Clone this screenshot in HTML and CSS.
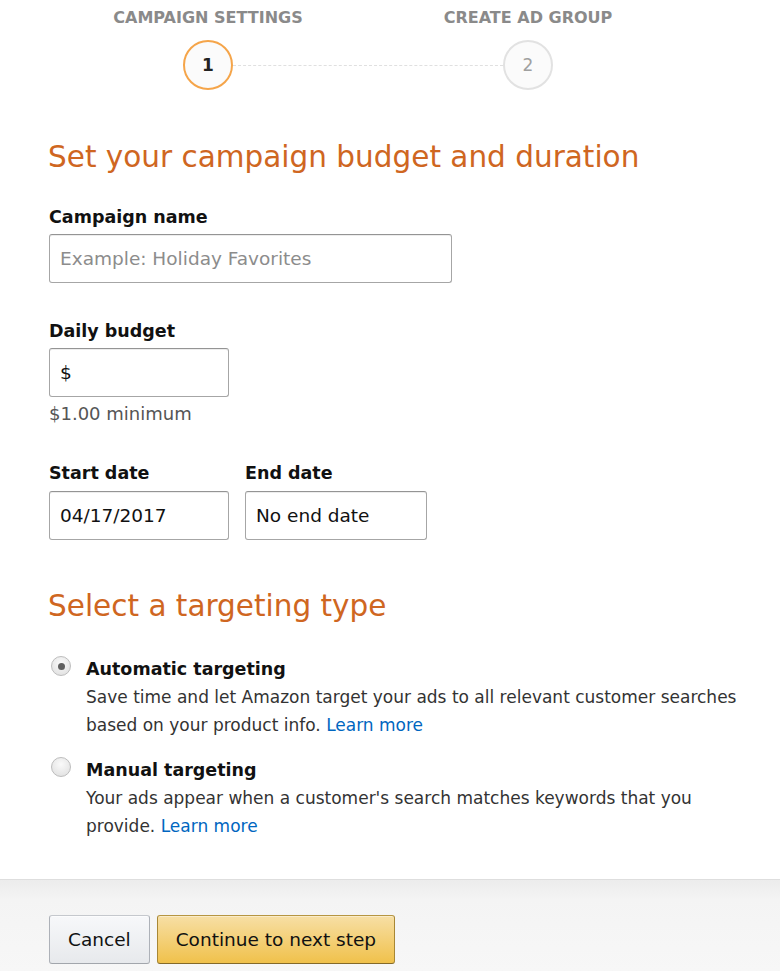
FILE: index.html
```html
<!DOCTYPE html>
<html lang="en">
<head>
<meta charset="utf-8">
<title>Campaign settings</title>
<link rel="stylesheet" href="styles.css">
</head>
<body>
<div class="stepper">
  <div class="step-labels">
    <span>CAMPAIGN SETTINGS</span>
    <span>CREATE AD GROUP</span>
  </div>
  <div class="step-track">
    <span class="dot dot-active">1</span>
    <span class="track-line"></span>
    <span class="dot dot-next">2</span>
  </div>
</div>

<main class="content">
  <h1 class="section-title">Set your campaign budget and duration</h1>

  <label class="field-label" for="cname">Campaign name</label>
  <input class="text-input input-wide" id="cname" type="text" placeholder="Example: Holiday Favorites">

  <label class="field-label label-gap" for="budget">Daily budget</label>
  <input class="text-input input-short" id="budget" type="text" value="$">
  <div class="hint">$1.00 minimum</div>

  <div class="date-row">
    <div class="date-col">
      <label class="field-label" for="sdate">Start date</label>
      <input class="text-input input-start" id="sdate" type="text" value="04/17/2017">
    </div>
    <div class="date-col">
      <label class="field-label" for="edate">End date</label>
      <input class="text-input input-end" id="edate" type="text" value="No end date">
    </div>
  </div>

  <h2 class="section-title section-title-2">Select a targeting type</h2>

  <div class="option">
    <span class="radio radio-checked"></span>
    <div class="option-body">
      <div class="option-title">Automatic targeting</div>
      <div class="option-desc">
        <div class="desc-line">Save time and let Amazon target your ads to all relevant customer searches</div>
        <div class="desc-line"><span>based on your product info.</span> <a href="#" class="link">Learn more</a></div>
      </div>
    </div>
  </div>

  <div class="option option-2">
    <span class="radio"></span>
    <div class="option-body">
      <div class="option-title">Manual targeting</div>
      <div class="option-desc">
        <div class="desc-line">Your ads appear when a customer's search matches keywords that you</div>
        <div class="desc-line"><span>provide.</span> <a href="#" class="link">Learn more</a></div>
      </div>
    </div>
  </div>
</main>

<footer class="footer">
  <button class="btn btn-cancel" type="button">Cancel</button>
  <button class="btn btn-primary" type="button">Continue to next step</button>
</footer>
</body>
</html>
```

FILE: styles.css
```css
html, body {
  margin: 0;
  padding: 0;
  background: #ffffff;
}

body {
  font-family: "DejaVu Sans", "Liberation Sans", sans-serif;
  color: #111111;
  width: 780px;
  height: 971px;
  overflow: hidden;
  display: flex;
  flex-direction: column;
}

/* ---------- stepper ---------- */
.stepper {
  width: 640px;
  margin-left: 48px;
  padding-top: 8px;
}

.step-labels {
  display: grid;
  grid-template-columns: 1fr 1fr;
  text-align: center;
  font-size: 16px;
  line-height: 20px;
  font-weight: bold;
  color: #8a8a8a;
}

.step-track {
  display: flex;
  align-items: center;
  margin-top: 12px;
  padding: 0 135px;
}

.dot {
  width: 50px;
  height: 50px;
  box-sizing: border-box;
  border-radius: 50%;
  display: flex;
  align-items: center;
  justify-content: center;
  font-size: 17px;
  background: #fbfbfb;
}

.dot-active {
  border: 2px solid #f5a54a;
  color: #222222;
  font-weight: bold;
}

.dot-next {
  border: 2px solid #e2e2e2;
  color: #a0a0a0;
}

.track-line {
  flex: 1;
  border-top: 1px dashed #e0e0e0;
}

/* ---------- content ---------- */
.content {
  padding-left: 49px;
  display: flex;
  flex-direction: column;
  align-items: flex-start;
}

.section-title {
  margin: 49px 0 0 -1px;
  font-size: 29.5px;
  line-height: 36px;
  font-weight: normal;
  color: #cf6621;
}

.section-title-2 {
  margin-top: 48px;
}

.field-label {
  display: block;
  margin-top: 31px;
  font-size: 17.5px;
  line-height: 22px;
  font-weight: bold;
  color: #111111;
}

.label-gap {
  margin-top: 37px;
}

.text-input {
  display: block;
  margin-top: 6px;
  height: 49px;
  box-sizing: border-box;
  padding: 0 10px;
  border: 1px solid #a6a6a6;
  border-top-color: #949494;
  border-radius: 3px;
  box-shadow: 0 1px 0 rgba(255, 255, 255, 0.5), inset 0 1px 0 rgba(0, 0, 0, 0.07);
  font-family: "DejaVu Sans", "Liberation Sans", sans-serif;
  font-size: 18.5px;
  color: #111111;
  background: #ffffff;
  outline: none;
}

.text-input::placeholder {
  color: #8c8c8c;
}

.input-wide { width: 403px; }
.input-short { width: 180px; }
.input-start { width: 180px; }
.input-end { width: 182px; }

.hint {
  margin-top: 6px;
  font-size: 18px;
  line-height: 22px;
  color: #555555;
}

.date-row {
  display: flex;
  gap: 16px;
}

.date-col .field-label {
  margin-top: 37px;
}

.date-col .text-input {
  margin-top: 7px;
}

/* ---------- radio options ---------- */
.option {
  display: flex;
  align-items: flex-start;
  margin-top: 31px;
  width: 690px;
}

.option-2 {
  margin-top: 17px;
}

.radio {
  flex: none;
  width: 20px;
  height: 20px;
  box-sizing: border-box;
  margin: 1px 0 0 2px;
  border-radius: 50%;
  border: 1px solid #bdbdbd;
  background: radial-gradient(circle at 50% 35%, #fafafa 0%, #e4e4e4 75%, #d8d8d8 100%);
  display: flex;
  align-items: center;
  justify-content: center;
}

.radio-checked::after {
  content: "";
  width: 7px;
  height: 7px;
  border-radius: 50%;
  background: #5f5f5f;
}

.option-body {
  margin-left: 15px;
}

.option-title {
  font-size: 17.5px;
  line-height: 28px;
  font-weight: bold;
  color: #111111;
}

.option-desc {
  font-size: 17px;
  line-height: 28px;
  color: #333333;
}

.desc-line {
  white-space: nowrap;
}

.link {
  color: #0066c0;
  text-decoration: none;
}

/* ---------- footer ---------- */
.footer {
  margin-top: 39px;
  flex: 1;
  border-top: 1px solid #dedede;
  background: linear-gradient(#ececec 0px, #f4f4f4 20px, #f7f7f7 100%);
  padding: 35px 0 0 49px;
  display: flex;
  align-items: flex-start;
  gap: 7px;
}

.btn {
  height: 49px;
  box-sizing: border-box;
  padding: 0 18px;
  border-radius: 3px;
  font-family: "DejaVu Sans", "Liberation Sans", sans-serif;
  font-size: 18.5px;
  color: #111111;
  cursor: pointer;
}

.btn-cancel {
  border: 1px solid #adb1b8;
  border-top-color: #c5c8cd;
  border-bottom-color: #a2a6ac;
  background: linear-gradient(#f7f8fa, #e7e9ec);
  box-shadow: inset 0 1px 0 rgba(255, 255, 255, 0.6);
}

.btn-primary {
  border: 1px solid #a88734;
  border-top-color: #b69642;
  border-bottom-color: #846a29;
  background: linear-gradient(#f7dfa5, #f0c14b);
  box-shadow: inset 0 1px 0 rgba(255, 255, 255, 0.4);
}
```
